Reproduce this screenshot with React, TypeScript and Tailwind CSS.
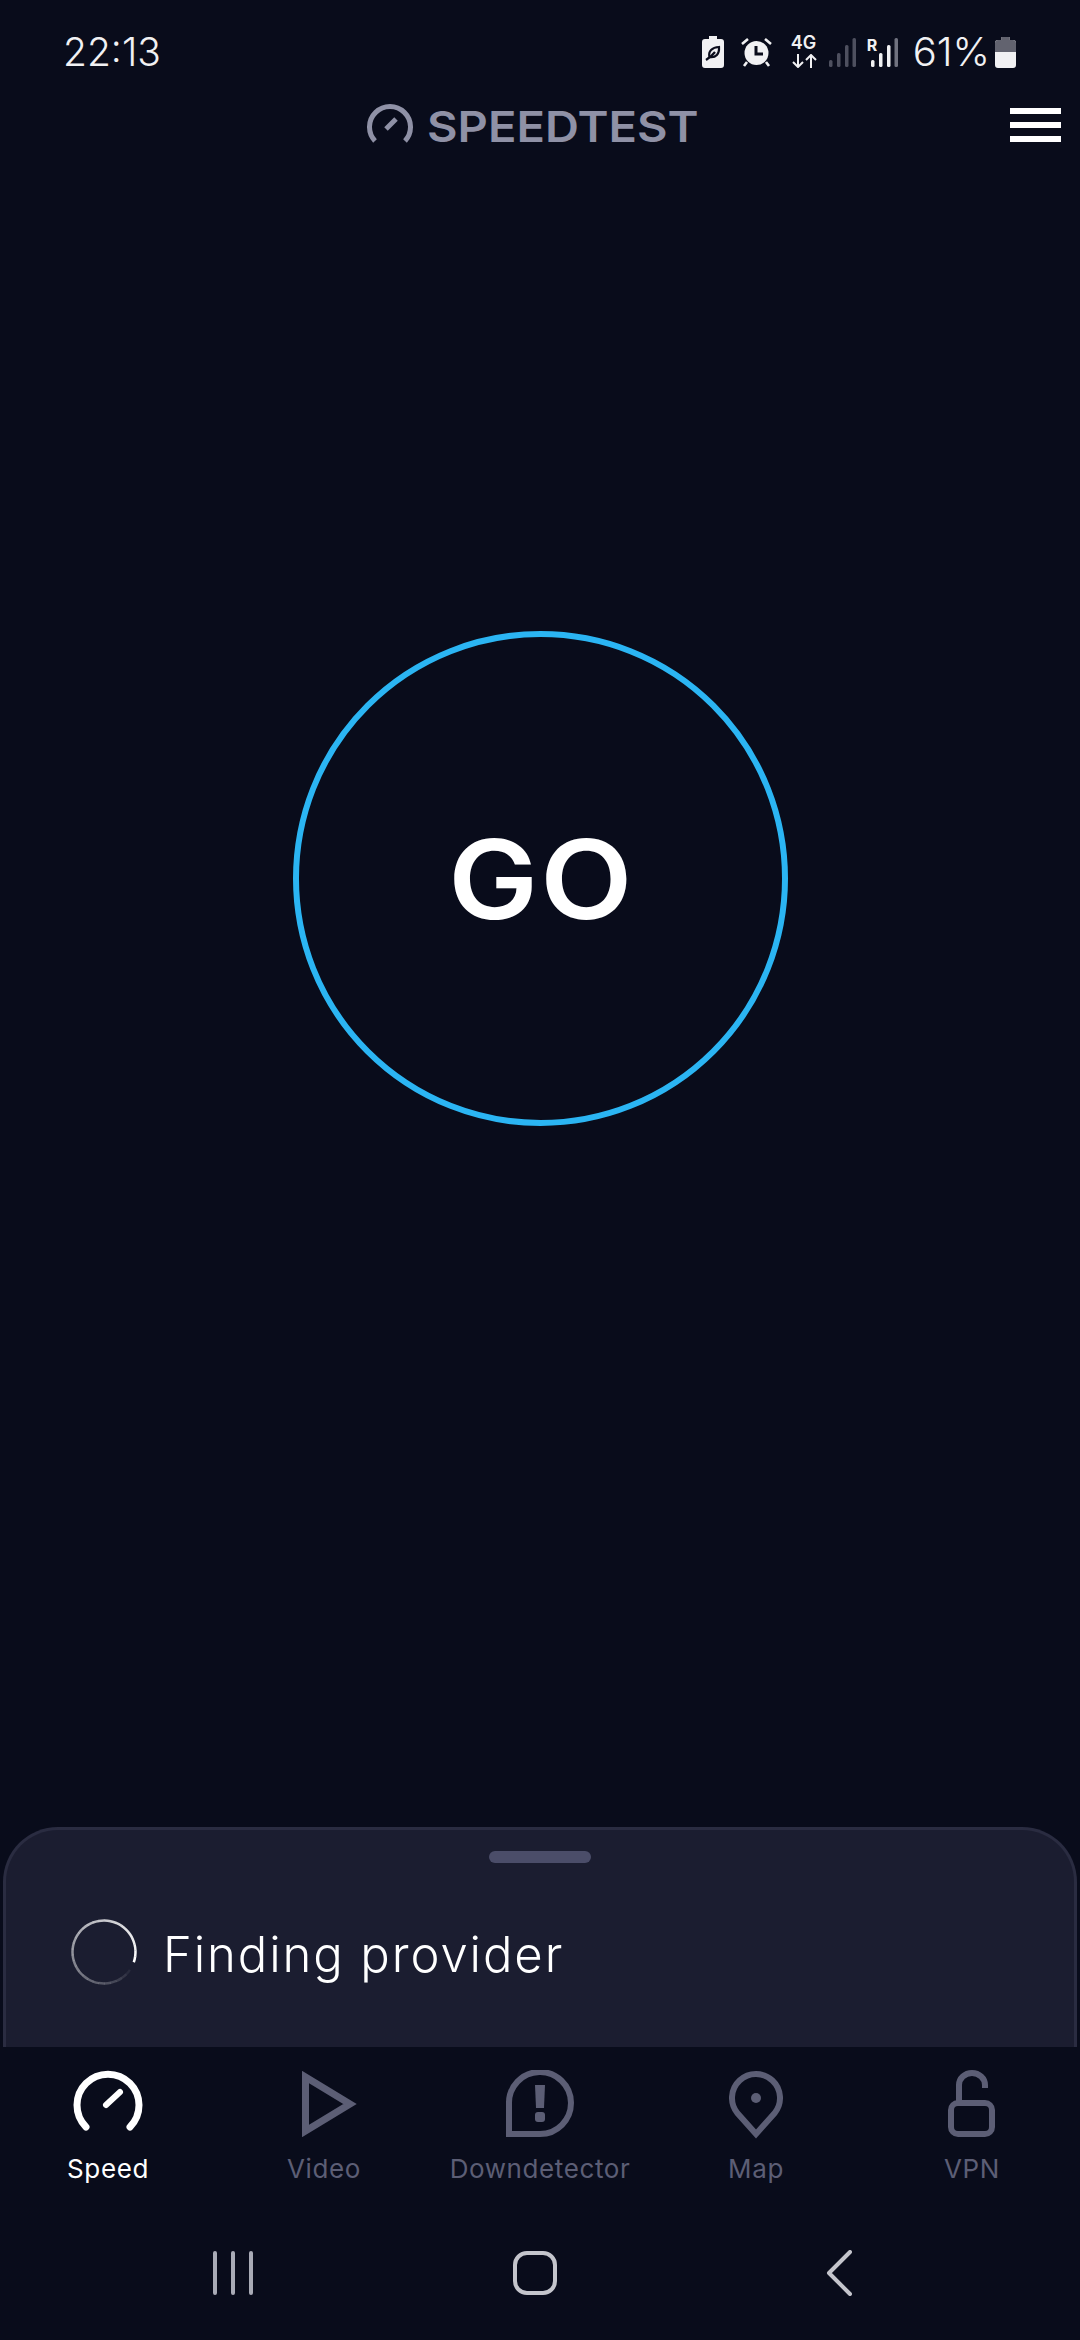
const sans = 'font-["Inter",sans-serif]'

const NavIcon = ({ name, active }: { name: string; active?: boolean }) => {
    const stroke = active ? '#ffffff' : '#5c5e75'

    if (name === 'speed') {
        return (
            <svg width="70" height="70" viewBox="0 0 70 70" fill="none" stroke={stroke} strokeWidth="7" strokeLinecap="round">
                <path d="M13 58 A31 31 0 1 1 57 58" />
                <path d="M33 36 L47 23" strokeWidth="6" />
            </svg>
        )
    }
    if (name === 'video') {
        return (
            <svg width="56" height="66" viewBox="0 0 56 66" fill="none" stroke={stroke} strokeWidth="7" className="ml-[12px]">
                <path d="M3.5 6 L48 33 L3.5 60 Z" />
            </svg>
        )
    }
    if (name === 'downdetector') {
        return (
            <svg width="68" height="68" viewBox="0 0 68 68" fill="none">
                <path d="M3 64 L3 34 A31 31 0 1 1 34 64 Z" stroke={stroke} strokeWidth="6" />
                <path d="M29 15 L39 15 L38 38 L30 38 Z" fill={stroke} strokeLinejoin="round" />
                <rect x="29" y="42" width="10" height="10" rx="3" fill={stroke} />
            </svg>
        )
    }
    if (name === 'map') {
        return (
            <svg width="54" height="70" viewBox="0 0 54 70" fill="none">
                <path d="M27 65 L8.5 44.3 A24 24 0 1 1 45.5 44.3 Z" stroke={stroke} strokeWidth="6" />
                <circle cx="27" cy="29" r="5" fill={stroke} />
            </svg>
        )
    }
    return (
        <svg width="48" height="68" viewBox="0 0 48 68" fill="none" stroke={stroke} strokeWidth="6">
            <rect x="3" y="33" width="41" height="31" rx="7" />
            <path d="M11 33 L11 15 A13 12 0 0 1 37 15 L37 18" />
        </svg>
    )
}

const navItems = [
    { name: 'speed', label: 'Speed', active: true },
    { name: 'video', label: 'Video' },
    { name: 'downdetector', label: 'Downdetector' },
    { name: 'map', label: 'Map' },
    { name: 'vpn', label: 'VPN' },
]

// 끝으로 갈수록 흐려지는 스피너
const Spinner = () => {
    const count = 32
    const start = 19
    const sweep = 344
    const r = 31.5
    const point = (deg: number) => {
        const rad = (deg * Math.PI) / 180
        return `${33 + r * Math.cos(rad)} ${33 + r * Math.sin(rad)}`
    }

    return (
        <svg width="66" height="66" viewBox="0 0 66 66" fill="none" className="mr-[26px]">
            {Array.from({ length: count }).map((_, i) => {
                const a = start - (sweep * i) / count
                const b = start - (sweep * (i + 1)) / count - 0.5
                return (
                    <path
                        key={i}
                        d={`M${point(a)} A${r} ${r} 0 0 0 ${point(b)}`}
                        stroke="#ffffff"
                        strokeWidth="2.5"
                        strokeOpacity={Math.pow(1 - i / count, 0.8)}
                    />
                )
            })}
        </svg>
    )
}

const SignalBars = ({ colors }: { colors: string[] }) => (
    <svg width="27" height="29" viewBox="0 0 27 29">
        <rect x="0" y="22" width="3.5" height="7" rx="1.5" fill={colors[0]} />
        <rect x="8" y="15" width="3.5" height="14" rx="1.5" fill={colors[1]} />
        <rect x="16" y="7" width="3.5" height="22" rx="1.5" fill={colors[2]} />
        <rect x="23.5" y="0" width="3.5" height="29" rx="1.5" fill={colors[3]} />
    </svg>
)

const StatusIcons = () => (
    <div className="flex items-center">
        {/* 배터리 절약 */}
        <svg width="22" height="32" viewBox="0 0 22 32" className="mr-[17px]">
            <path d="M7 0 H15 V3 H19 A3 3 0 0 1 22 6 V29 A3 3 0 0 1 19 32 H3 A3 3 0 0 1 0 29 V6 A3 3 0 0 1 3 3 H7 Z" fill="#f1f1f3" />
            <path d="M7.5 21 C6 15 10 11.5 17 11 C17.5 18 14 22 7.5 21 Z" fill="none" stroke="#0a0c1b" strokeWidth="2.2" />
            <path d="M4 24 C7 22 10 20 13 16" fill="none" stroke="#0a0c1b" strokeWidth="2.2" />
        </svg>
        <svg width="31" height="30" viewBox="0 0 31 30" className="mr-[20px]">
            <circle cx="15.5" cy="16" r="12" fill="#f1f1f3" />
            <path d="M1 7 L7 2 M30 7 L24 2 M6 25 L3 29 M25 25 L28 29" stroke="#f1f1f3" strokeWidth="2.6" fill="none" />
            <path d="M15 9 V17 H22" stroke="#0a0c1b" strokeWidth="3" fill="none" />
        </svg>
        <div className="relative w-[25px] h-[31px] mr-[12px]">
            <span className={`absolute left-[-1px] top-[-4px] ${sans} text-[18px] leading-[20px] font-semibold text-[#f1f1f3]`}>4G</span>
            <svg width="25" height="14" viewBox="0 0 25 14" className="absolute left-0 bottom-0" fill="none" stroke="#f1f1f3" strokeWidth="2">
                <path d="M6 0 V12 M1 8 L6 13 L11 8 M19 14 V2 M14 6 L19 1 L24 6" />
            </svg>
        </div>
        <div className="mr-[11px]">
            <SignalBars colors={['#4e505f', '#4e505f', '#4e505f', '#4e505f']} />
        </div>
        <div className="relative w-[30px] h-[29px] mr-[16px]">
            <span className={`absolute left-0 top-[-1px] ${sans} text-[16px] leading-[16px] font-bold text-[#f1f1f3]`}>R</span>
            <div className="absolute left-[4px] top-0">
                <SignalBars colors={['#f1f1f3', '#f1f1f3', '#f1f1f3', '#70727f']} />
            </div>
        </div>
        <span className={`${sans} text-[40px] leading-[44px] text-[#f1f1f3] font-light mr-[5px]`}>61%</span>
        <svg width="21" height="31" viewBox="0 0 21 31">
            <path d="M6.5 0 H14.5 V3 H18 A3 3 0 0 1 21 6 V28 A3 3 0 0 1 18 31 H3 A3 3 0 0 1 0 28 V6 A3 3 0 0 1 3 3 H6.5 Z" fill="#f1f1f3" />
            <path d="M6.5 0 H14.5 V3 H18 A3 3 0 0 1 21 6 V15 H0 V6 A3 3 0 0 1 3 3 H6.5 Z" fill="#62636f" />
        </svg>
    </div>
)

export default function App() {
    return (
        <div className="flex flex-col w-[1080px] h-[2340px] overflow-hidden bg-[#090c1b]">
            {/* 상태바 */}
            <div className="flex h-[80px] items-center justify-between pt-[24px] pl-[63px] pr-[64px]">
                <span className={`${sans} text-[39px] leading-[44px] font-light text-[#f1f1f3]`}>22:13</span>
                <StatusIcons />
            </div>

            {/* 헤더 */}
            <div className="relative flex h-[86px] items-center justify-center pr-[37px]">
                <svg width="46" height="40" viewBox="0 0 46 40" fill="none" stroke="#8f91a6" strokeWidth="5" className="mr-[14px]">
                    <path d="M8 38 A20.5 20.5 0 1 1 38 38" />
                    <path d="M19 26 L29 16" />
                </svg>
                <span className={`${sans} mt-[6px] text-[43px] leading-[50px] font-semibold text-[#8f91a6] origin-left scale-x-[1.094]`}>SPEEDTEST</span>
                <div className="absolute right-[19px] top-[28px] flex flex-col gap-[8px]">
                    <div className="w-[51px] h-[6px] bg-white" />
                    <div className="w-[51px] h-[6px] bg-white" />
                    <div className="w-[51px] h-[6px] bg-white" />
                </div>
            </div>

            {/* GO 버튼 */}
            <div className="flex flex-1 justify-center pt-[465px]">
                <div className="flex w-[495px] h-[495px] items-center justify-center rounded-full border-[6px] border-[#2bb5f3]">
                    <span className={`${sans} ml-[3px] text-[110px] leading-none font-[570] text-white tracking-[2px] scale-x-[1.09]`}>GO</span>
                </div>
            </div>

            {/* 하단 시트 */}
            <div className="mx-[3px] h-[220px] rounded-t-[55px] border-[3px] border-b-0 border-[#2a2c41] bg-[#1b1d30]">
                <div className="w-[102px] h-[12px] mx-auto mt-[21px] rounded-full bg-[#4b4d69]" />
                <div className="flex items-center mt-[56px] ml-[65px]">
                    <Spinner />
                    <span className={`${sans} mt-[5px] text-[49px] leading-[60px] font-light text-white tracking-[1.9px]`}>Finding provider</span>
                </div>
            </div>

            {/* 탭 */}
            <div className="grid grid-cols-5 h-[163px] pt-[22px]">
                {navItems.map((item) => (
                    <div key={item.name} className="flex flex-col items-center">
                        <div className="flex h-[70px] items-center justify-center">
                            <NavIcon name={item.name} active={item.active} />
                        </div>
                        <span className={`${sans} mt-[13px] text-[26px] leading-[34px] font-normal tracking-[0.6px] ${item.active ? 'text-white' : 'text-[#5c5e75]'}`}>
                            {item.label}
                        </span>
                    </div>
                ))}
            </div>

            {/* 시스템 내비게이션 */}
            <div className="flex h-[130px] items-start pt-[41px] pl-[213px]">
                <svg width="40" height="44" viewBox="0 0 40 44" fill="none" stroke="#a9abb6" strokeWidth="4" strokeLinecap="round" className="mr-[260px]">
                    <path d="M2 2 V42 M20 2 V42 M38 2 V42" />
                </svg>
                <svg width="44" height="44" viewBox="0 0 44 44" fill="none" stroke="#c4c5cc" strokeWidth="4" className="mr-[269px]">
                    <rect x="2" y="2" width="40" height="40" rx="12" />
                </svg>
                <svg width="26" height="46" viewBox="0 0 26 46" fill="none" stroke="#c4c5cc" strokeWidth="4" strokeLinecap="round" strokeLinejoin="round" className="-mt-[1px]">
                    <path d="M24 2 L3 23 L24 44" />
                </svg>
            </div>
        </div>
    )
}
